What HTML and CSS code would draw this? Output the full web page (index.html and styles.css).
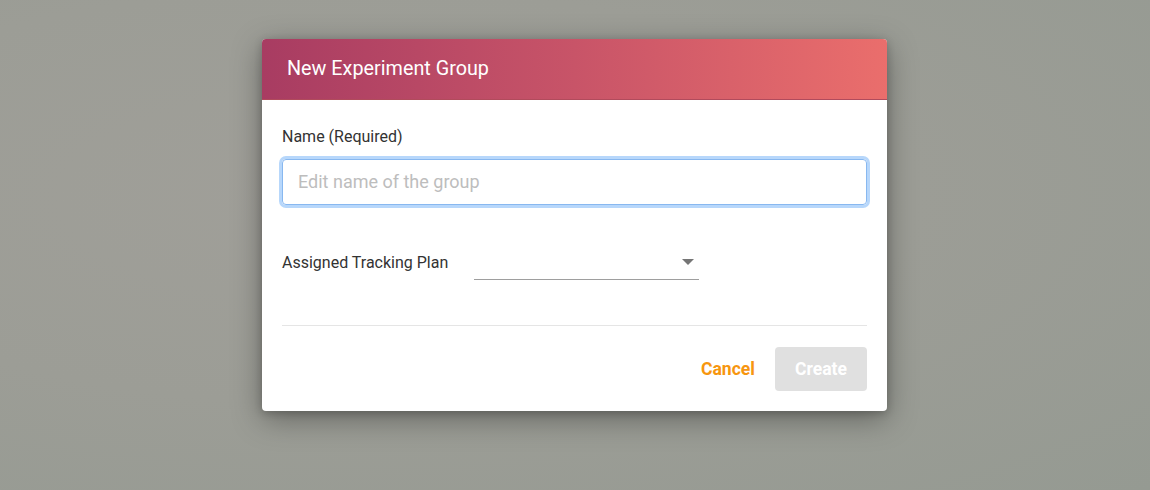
FILE: index.html
```html
<!DOCTYPE html>
<html>
<head>
<meta charset="utf-8">
<link rel="stylesheet" href="styles.css">
</head>
<body>
<div class="backdrop">
  <div class="dialog">
    <div class="dialog-header">New Experiment Group</div>
    <div class="dialog-body">
      <label class="field-label">Name (Required)</label>
      <div class="text-input">Edit name of the group</div>
      <div class="select-row">
        <span class="select-label">Assigned Tracking Plan</span>
        <div class="select">
          <svg class="select-arrow" width="12" height="6" viewBox="0 0 12 6"><path d="M0 0 L12 0 L6 6 Z" fill="#757575"/></svg>
        </div>
      </div>
      <div class="divider"></div>
      <div class="actions">
        <button class="btn-cancel">Cancel</button>
        <button class="btn-create">Create</button>
      </div>
    </div>
  </div>
</div>
</body>
</html>
```

FILE: styles.css
```css
html, body {
  margin: 0;
  padding: 0;
  width: 1150px;
  height: 490px;
  overflow: hidden;
}
body {
  font-family: Roboto, "Liberation Sans", sans-serif;
  background: #9a9c95;
}
.backdrop {
  width: 1150px;
  height: 490px;
  background: radial-gradient(ellipse at 30% 40%, #a09f99 0%, #9c9d96 50%, #959a92 100%);
  display: flex;
  justify-content: flex-start;
  align-items: flex-start;
  padding: 39px 0 0 262px;
  box-sizing: border-box;
}
.dialog {
  width: 625px;
  background: #fff;
  border-radius: 4px;
  overflow: hidden;
  box-shadow: 0 8px 30px rgba(0,0,0,0.35), 0 2px 8px rgba(0,0,0,0.2);
}
.dialog-header {
  height: 61px;
  box-sizing: border-box;
  background: linear-gradient(90deg, #a83c62 0%, #c85468 50%, #ea6e6c 100%);
  color: #fff;
  font-size: 19.8px;
  line-height: 60px;
  padding-left: 25px;
  border-bottom: 1px solid #b14b5c;
}
.dialog-body {
  padding: 27px 20px 20px 20px;
}
.field-label {
  display: block;
  font-size: 16px;
  line-height: 20px;
  color: #333;
}
.text-input {
  margin-top: 12px;
  height: 46px;
  box-sizing: border-box;
  border: 1px solid #88b8f0;
  border-radius: 4px;
  box-shadow: 0 0 0 3px #b7d7fb;
  padding: 0 15px;
  font-size: 18px;
  line-height: 43px;
  color: #bdbdbd;
}
.select-row {
  margin-top: 43px;
  display: flex;
  align-items: center;
  height: 32px;
}
.select-label {
  font-size: 16px;
  color: #333;
  width: 192px;
  margin-bottom: 4px;
}
.select {
  width: 225px;
  height: 32px;
  box-sizing: border-box;
  border-bottom: 1px solid #9e9e9e;
  display: flex;
  justify-content: flex-end;
  align-items: center;
  padding-right: 5px;
  padding-bottom: 4px;
}
.divider {
  margin-top: 45px;
  height: 1px;
  background: #e5e5e5;
}
.actions {
  margin-top: 21px;
  display: flex;
  justify-content: flex-end;
  align-items: center;
  gap: 20px;
}
.btn-cancel {
  background: none;
  border: none;
  padding: 0;
  font-family: inherit;
  font-size: 17.6px;
  font-weight: 700;
  color: #f7960f;
}
.btn-create {
  width: 92px;
  height: 44px;
  border: none;
  border-radius: 4px;
  background: #e0e0e0;
  color: #fff;
  font-family: inherit;
  font-size: 17.5px;
  font-weight: 700;
}
```
